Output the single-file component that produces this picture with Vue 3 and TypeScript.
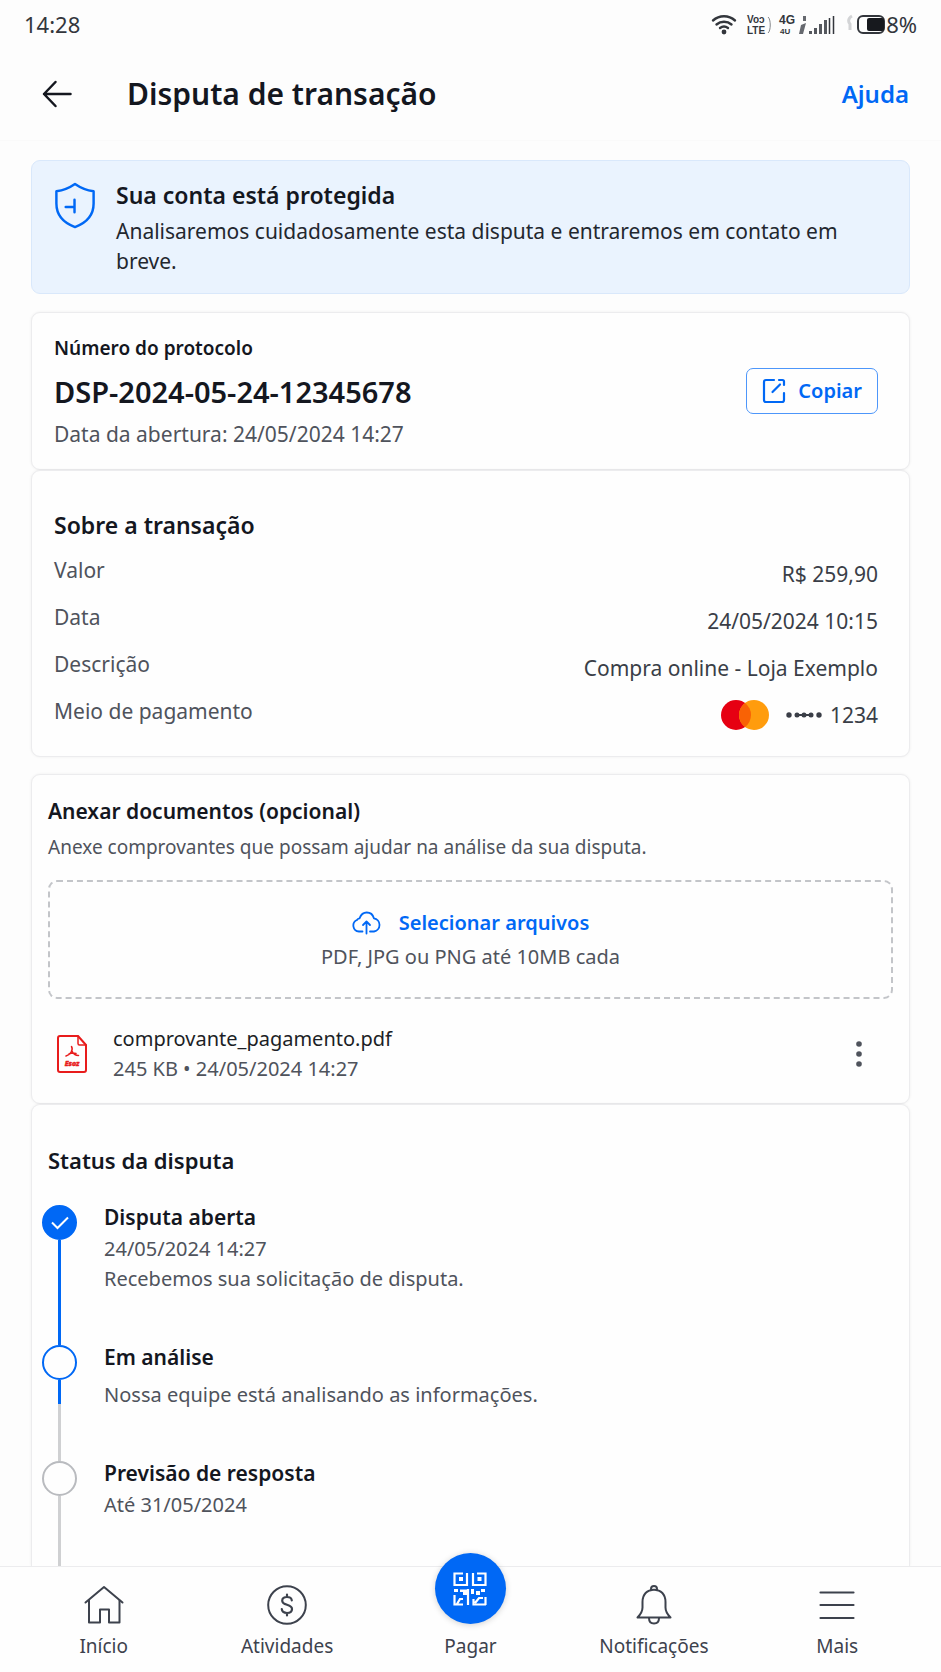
<script setup lang="ts">
interface Detail {
  label: string
  value: string
  card?: boolean
}

interface Step {
  title: string
  lines: string[]
  state: 'done' | 'current' | 'pending'
}

interface NavItem {
  label: string
  icon: 'home' | 'money' | 'pay' | 'bell' | 'menu'
}

const details: Detail[] = [
  { label: 'Valor', value: 'R$ 259,90' },
  { label: 'Data', value: '24/05/2024 10:15' },
  { label: 'Descrição', value: 'Compra online - Loja Exemplo' },
  { label: 'Meio de pagamento', value: '1234', card: true },
]

const steps: Step[] = [
  { title: 'Disputa aberta', lines: ['24/05/2024 14:27', 'Recebemos sua solicitação de disputa.'], state: 'done' },
  { title: 'Em análise', lines: ['Nossa equipe está analisando as informações.'], state: 'current' },
  { title: 'Previsão de resposta', lines: ['Até 31/05/2024'], state: 'pending' },
]

const navItems: NavItem[] = [
  { label: 'Início', icon: 'home' },
  { label: 'Atividades', icon: 'money' },
  { label: 'Pagar', icon: 'pay' },
  { label: 'Notificações', icon: 'bell' },
  { label: 'Mais', icon: 'menu' },
]

const protocol = 'DSP-2024-05-24-12345678'

function copyProtocol(): void {
  navigator.clipboard?.writeText(protocol)
}
</script>

<template>
  <div class="screen">
    <div class="statusbar">
      <span class="clock">14:28</span>
      <div class="indicators">
        <svg width="126" height="24" viewBox="0 0 126 24" aria-hidden="true">
          <g fill="none" stroke="#33363c" stroke-width="2.400" stroke-linecap="round">
            <path d="M2 8.5a16.500 16.500 0 0 1 22 0" />
            <path d="M5.500 12.500a11.500 11.500 0 0 1 15 0" />
            <path d="M9 16a6.500 6.500 0 0 1 8 0" />
          </g>
          <circle cx="13" cy="20" r="2.400" fill="#33363c" />
          <g fill="#33363c" font-family="'Liberation Sans', sans-serif" font-weight="700">
            <text x="36" y="11" font-size="10">Voɔ</text>
            <text x="36" y="22" font-size="10">LTE</text>
            <text x="68" y="12" font-size="12">4G</text>
            <text x="69" y="22" font-size="8">4U</text>
          </g>
          <path d="M57 5c3 2 3 14 0 16" fill="none" stroke="#85878b" stroke-width="1" />
          <path d="M90 13l5-2-3 11h-4zM92 4h3v5h-3z" fill="#66696f" />
          <path d="M98 19h3v3h-3zM103 16h3v6h-3zM108 12h3v10h-3zM113 8h3v14h-3z" fill="#55585e" />
          <path d="M118.500 6v16M122.500 4v18" fill="none" stroke="#33363c" stroke-width="1.500" />
        </svg>
        <svg class="battery" width="38" height="24" viewBox="0 0 38 24" aria-hidden="true">
          <path d="M5 4c-4 2-4 6-2 8v6" fill="none" stroke="#d3d4d6" stroke-width="3" />
          <rect x="11" y="4" width="26" height="17" rx="5" fill="none" stroke="#33363c" stroke-width="2" />
          <rect x="20" y="6" width="17" height="13" rx="2" fill="#17191e" />
        </svg>
        <span>8%</span>
      </div>
    </div>

    <header class="header">
      <button class="back" type="button" aria-label="Voltar">
        <svg width="30" height="28" viewBox="0 0 30 28" fill="none" stroke="#14171f" stroke-width="2.500" stroke-linecap="round" stroke-linejoin="round">
          <path d="M28.500 14H2M13.500 2L2 14l11.500 12" />
        </svg>
      </button>
      <h1>Disputa de transação</h1>
      <a class="help" href="#ajuda">Ajuda</a>
    </header>

    <main class="content">
      <section class="notice">
        <svg width="42" height="47" viewBox="0 0 42 48" fill="none" stroke="#0068f5" stroke-width="2.500" stroke-linejoin="round" stroke-linecap="round" aria-hidden="true">
          <path d="M21 2C15.500 5.800 9 8.500 2 9.500V22c0 13 8 20 19 24 11-4 19-11 19-24V9.500C33 8.500 26.500 5.800 21 2z" />
          <path d="M20.500 18v13M11.500 25.500h9" />
        </svg>
        <div>
          <h2>Sua conta está protegida</h2>
          <p>Analisaremos cuidadosamente esta disputa e entraremos em contato em breve.</p>
        </div>
      </section>

      <section class="card protocol">
        <div>
          <h2>Número do protocolo</h2>
          <p class="code">{{ protocol }}</p>
          <p class="opened">Data da abertura: 24/05/2024 14:27</p>
        </div>
        <button class="copy" type="button" @click="copyProtocol">
          <svg width="24" height="26" viewBox="0 0 24 26" fill="none" stroke="#0068f5" stroke-width="2.200" stroke-linecap="round" stroke-linejoin="round" aria-hidden="true">
            <path d="M12 2H4a2 2 0 0 0-2 2v18a2 2 0 0 0 2 2h16a2 2 0 0 0 2-2v-7" />
            <path d="M17 2h3.500a1.500 1.500 0 0 1 1.500 1.500V7M10.500 14l7.500-7.500" />
          </svg>
          Copiar
        </button>
      </section>

      <section class="card transaction">
        <h2>Sobre a transação</h2>
        <dl>
          <div v-for="item in details" :key="item.label" class="row">
            <dt>{{ item.label }}</dt>
            <dd>
              <template v-if="item.card">
                <svg width="48" height="32" viewBox="0 0 48 32" role="img" aria-label="Cartão Mastercard">
                  <circle cx="15" cy="16" r="15" fill="#e60012" />
                  <circle cx="33" cy="16" r="15" fill="#ff9c0d" />
                  <path d="M24 4a15 15 0 0 1 0 24 15 15 0 0 1 0-24z" fill="#f96205" />
                </svg>
                <svg class="mask" width="36" height="6" viewBox="0 0 36 6" fill="#3a3e47" aria-hidden="true">
                  <circle cx="3" cy="3" r="2.700" />
                  <circle cx="11" cy="3" r="2.500" />
                  <circle cx="18" cy="3" r="2.500" />
                  <circle cx="25" cy="3" r="2.500" />
                  <circle cx="33" cy="3" r="2.700" />
                  <path d="M11 2h14v2H11z" />
                </svg>
              </template>
              {{ item.value }}
            </dd>
          </div>
        </dl>
      </section>

      <section class="card documents">
        <h2>Anexar documentos (opcional)</h2>
        <p class="hint">Anexe comprovantes que possam ajudar na análise da sua disputa.</p>
        <button class="dropzone" type="button">
          <span class="select">
            <svg width="29" height="24" viewBox="0 0 29 24" fill="none" stroke="#0068f5" stroke-width="1.800" stroke-linecap="round" stroke-linejoin="round" aria-hidden="true">
              <path d="M10.500 20.500H7A6 6 0 0 1 5 9c.5-1 1.500-1.600 2.500-1.700C9 3.500 11.500 1.500 14.700 1.500c3.600 0 6.300 2.300 7.200 5.800A6.700 6.700 0 0 1 22 20.500h-4" />
              <path d="M14.500 22.500V10.500M11 14l3.500-3.500L18 14" />
            </svg>
            Selecionar arquivos
          </span>
          <span class="formats">PDF, JPG ou PNG até 10MB cada</span>
        </button>
        <div class="file">
          <svg width="30" height="38" viewBox="0 0 30 38" fill="none" stroke="#e81c1c" stroke-width="2" stroke-linejoin="round" stroke-linecap="round" aria-hidden="true">
            <path d="M3 1h18l8 9v25a2 2 0 0 1-2 2H3a2 2 0 0 1-2-2V3a2 2 0 0 1 2-2z" />
            <path d="M21 1v7.500a1.500 1.500 0 0 0 1.500 1.500H29" stroke-width="1.500" />
            <path d="M14.500 11.500c2 3-1 8.500-5.500 9.500M15 16c1 2.500 3.500 4.500 6.500 4.500M12 19c2-1 4.500-1.300 7-.5" stroke-width="1.500" />
            <text x="15" y="31" text-anchor="middle" font-family="'Noto Sans', sans-serif" font-size="7" font-weight="800" font-style="italic" fill="#e81c1c" stroke="#e81c1c" stroke-width="0.500">Esoz</text>
          </svg>
          <div class="fileinfo">
            <p class="filename">comprovante_pagamento.pdf</p>
            <p class="filemeta">245 KB • 24/05/2024 14:27</p>
          </div>
          <button class="more" type="button" aria-label="Opções do arquivo">
            <svg width="6" height="26" viewBox="0 0 6 26" fill="#4f535c">
              <circle cx="3" cy="3" r="2.800" />
              <circle cx="3" cy="13" r="2.800" />
              <circle cx="3" cy="23" r="2.800" />
            </svg>
          </button>
        </div>
      </section>

      <section class="card status">
        <h2>Status da disputa</h2>
        <ol>
          <li v-for="step in steps" :key="step.title" :class="step.state">
            <div class="track">
              <span class="dot">
                <svg v-if="step.state === 'done'" width="18" height="14" viewBox="0 0 18 14" fill="none" stroke="#fff" stroke-width="2" aria-hidden="true">
                  <path d="M1 6.500l5.500 5.500L17 1.500" />
                </svg>
              </span>
            </div>
            <div class="info">
              <h3>{{ step.title }}</h3>
              <p v-for="line in step.lines" :key="line">{{ line }}</p>
            </div>
          </li>
        </ol>
      </section>
    </main>

    <nav class="nav" aria-label="Principal">
      <a v-for="item in navItems" :key="item.label" :href="'#' + item.icon" :class="item.icon">
        <span v-if="item.icon === 'pay'" class="paydisc">
          <svg width="34" height="34" viewBox="0 0 34 34" fill="none" stroke="#fff" stroke-width="2.200" aria-hidden="true">
            <path d="M10 1.500H1.500V13H14V1M20 1v12H32.500V1.500H24" />
            <path d="M1.500 23v9.500H10M4 32l3-5h3M15 17v16M20.500 27v5.500H33M32.500 33V25M22 31l4-5h4" />
            <path d="M6 5h4v4H6zM24.500 5h4v4h-4zM1 17h4v3H1zM7 17.500h7v2.500H7zM10 20h4v3h-4zM18 17h3v5h-3zM23 19h4v4h-4zM28 17h4v3h-4z" fill="#fff" stroke="none" />
          </svg>
        </span>
        <svg v-else width="40" height="40" viewBox="0 0 40 40" fill="none" stroke="#3d424d" stroke-width="2" stroke-linejoin="round" stroke-linecap="round" aria-hidden="true">
          <template v-if="item.icon === 'home'">
            <path d="M1.500 17.500L20 2l18.500 15.500" />
            <path d="M5 15.500v22h11V24.500h9v13h10.500v-22" />
          </template>
          <template v-else-if="item.icon === 'money'">
            <circle cx="20" cy="20" r="18.800" />
            <path d="M24.800 15.300c-.3-2.200-2.200-3.300-4.800-3.300-2.800 0-4.800 1.300-4.800 3.700 0 5.300 9.800 2.800 9.800 8.300 0 2.600-2.200 4-5 4s-5-1.300-5.200-3.800M20 9.500V12M20 28v2.500" stroke-width="2.200" />
          </template>
          <template v-else-if="item.icon === 'bell'">
            <path d="M17 5.200V4a3 3 0 0 1 6 0v1.200" />
            <path d="M3.500 32.500h33c-3.500-3.500-5-6-5-10V17c0-7.500-4.500-12.300-11.500-12.300S8.500 9.500 8.500 17v5.500c0 4-1.500 6.500-5 10z" />
            <path d="M15 33c0 3.500 2 5.500 5 5.500s5-2 5-5.500" />
          </template>
          <path v-else d="M3.500 7.500h33M3.500 20h33M3.500 33h33" stroke-width="2.200" />
        </svg>
        <span>{{ item.label }}</span>
      </a>
    </nav>
  </div>
</template>

<style>
body {
  margin: 0;
  background: #fdfdfd;
}
</style>

<style scoped>
.screen {
  display: flex;
  flex-direction: column;
  min-height: 100vh;
  box-sizing: border-box;
  background: #fdfdfd;
  color: #14171f;
  font-family: "Noto Sans", "Open Sans", sans-serif;
  font-size: 21px;
  line-height: 30px;
}

h1,
h2,
h3,
p,
dl,
dd,
ol {
  margin: 0;
  padding: 0;
}

h1,
h2,
h3 {
  font-weight: 600;
}

button {
  padding: 0;
  border: 0;
  background: none;
  color: inherit;
  font: inherit;
  cursor: pointer;
}

a {
  color: inherit;
  text-decoration: none;
}

svg {
  display: block;
  flex: none;
}

.statusbar {
  display: flex;
  align-items: center;
  justify-content: space-between;
  height: 48px;
  padding: 0 24px;
  color: #33363c;
  font-size: 22px;
}

.indicators {
  display: flex;
  align-items: center;
}

.battery {
  margin-left: 10px;
  margin-right: 1px;
}

.header {
  display: flex;
  align-items: center;
  height: 93px;
  padding: 0 32px 0 42px;
  box-sizing: border-box;
  border-bottom: 1px solid #fafafa;
}

.back {
  display: flex;
  margin-right: 55px;
}

h1 {
  flex: 1;
  font-size: 30px;
  line-height: 40px;
}

.help {
  color: #0068f5;
  font-size: 24px;
  font-weight: 600;
}

.content {
  display: flex;
  flex: 1;
  flex-direction: column;
  padding: 19px 31px 0;
}

.notice {
  display: flex;
  gap: 20px;
  padding: 19px 24px 17px 22px;
  margin-bottom: 18px;
  border: 1px solid #d9e8fb;
  border-radius: 9px;
  background: #eaf3fe;
}

.notice h2 {
  font-size: 23px;
}

.notice p {
  padding-top: 6px;
  color: #23272f;
}

.notice svg {
  margin-top: 2px;
}

.card {
  border: 1px solid #ececee;
  border-radius: 9px;
  background: #fefefe;
  box-shadow: 0 0 3px #00000010;
}

.protocol {
  display: flex;
  align-items: center;
  justify-content: space-between;
  padding: 20px 31px 20px 22px;
}

.protocol h2 {
  font-size: 19px;
}

.code {
  padding: 9px 0 7px;
  font-size: 29px;
  line-height: 40px;
  font-weight: 600;
}

.opened {
  color: #4f535c;
}

.copy {
  display: flex;
  align-items: center;
  gap: 12px;
  height: 46px;
  padding: 0 15px;
  border: 1px solid #4d96fa;
  border-radius: 7px;
  color: #0068f5;
  font-size: 20px;
  font-weight: 600;
}

.transaction {
  padding: 39px 31px 22px 22px;
  margin-bottom: 17px;
}

.transaction h2 {
  padding-bottom: 15px;
  font-size: 23px;
}

.row {
  display: flex;
  justify-content: space-between;
  height: 47px;
}

.row:last-child {
  height: auto;
}

dt {
  color: #4f535c;
}

dd {
  display: flex;
  align-items: center;
  height: 38px;
  color: #3a3e47;
}

.mask {
  margin: 0 8px 0 17px;
}

.documents {
  padding: 21px 16px 19px;
}

.documents h2 {
  font-size: 21px;
}

.hint {
  padding: 6px 0 18px;
  color: #4f535c;
  font-size: 19px;
}

.dropzone {
  display: flex;
  flex-direction: column;
  align-items: center;
  justify-content: center;
  gap: 4px;
  width: 100%;
  height: 119px;
  border: 2px dashed #c3c5c9;
  border-radius: 9px;
}

.select {
  display: flex;
  align-items: center;
  gap: 18px;
  color: #0068f5;
  font-size: 20px;
  font-weight: 600;
}

.formats {
  color: #4f535c;
  font-size: 20px;
}

.file {
  display: flex;
  align-items: center;
  padding: 25px 27px 0 9px;
}

.fileinfo {
  flex: 1;
  padding-left: 26px;
  font-size: 20px;
}

.filename {
  color: #1c1f26;
}

.filemeta {
  color: #4f535c;
}

.more {
  display: flex;
  padding: 2px 4px;
}

.status {
  display: flex;
  flex: 1;
  flex-direction: column;
  padding: 40px 16px 0 10px;
  border-bottom: 0;
  border-bottom-left-radius: 0;
  border-bottom-right-radius: 0;
}

.status h2 {
  padding: 0 0 30px 6px;
  font-size: 22px;
}

ol {
  display: flex;
  flex: 1;
  flex-direction: column;
  list-style: none;
}

li {
  display: flex;
  gap: 27px;
}

li:last-child {
  flex: 1;
}

.track {
  display: flex;
  flex-direction: column;
  align-items: center;
}

.track::after {
  flex: 1;
  width: 3px;
  background: #cfd0d2;
  content: "";
}

.done .track::after {
  background: #0068f5;
}

.current .track::after {
  background: linear-gradient(#0068f5 24px, #cfd0d2 24px);
}

.dot {
  display: flex;
  align-items: center;
  justify-content: center;
  width: 35px;
  height: 35px;
  box-sizing: border-box;
  border: 2px solid #b9bbbf;
  border-radius: 50%;
}

.done .dot {
  border-color: #0068f5;
  background: #0068f5;
}

.current .dot {
  border-color: #0068f5;
}

.info {
  margin-top: -3px;
  padding-bottom: 51px;
  color: #4f535c;
  font-size: 20px;
}

.pending .info {
  padding-bottom: 20px;
}

.info h3 {
  padding-bottom: 2px;
  color: #14171f;
  font-size: 21px;
}

.current h3 {
  padding-bottom: 8px;
}

.nav {
  display: grid;
  grid-template-rows: 105px;
  grid-template-columns: repeat(5, 1fr);
  padding: 0 12px;
  border-top: 1px solid #ececee;
  background: #fefefe;
  color: #3d424d;
  font-size: 19px;
}

.nav a {
  display: flex;
  flex-direction: column;
  align-items: center;
  justify-content: flex-end;
  gap: 6px;
  padding-bottom: 11px;
}

.nav .pay {
  gap: 7px;
}

.paydisc {
  display: flex;
  flex: none;
  align-items: center;
  justify-content: center;
  width: 71px;
  height: 71px;
  border-radius: 50%;
  background: #0068f5;
  box-shadow: 0 1px 6px #0000002e;
}
</style>
